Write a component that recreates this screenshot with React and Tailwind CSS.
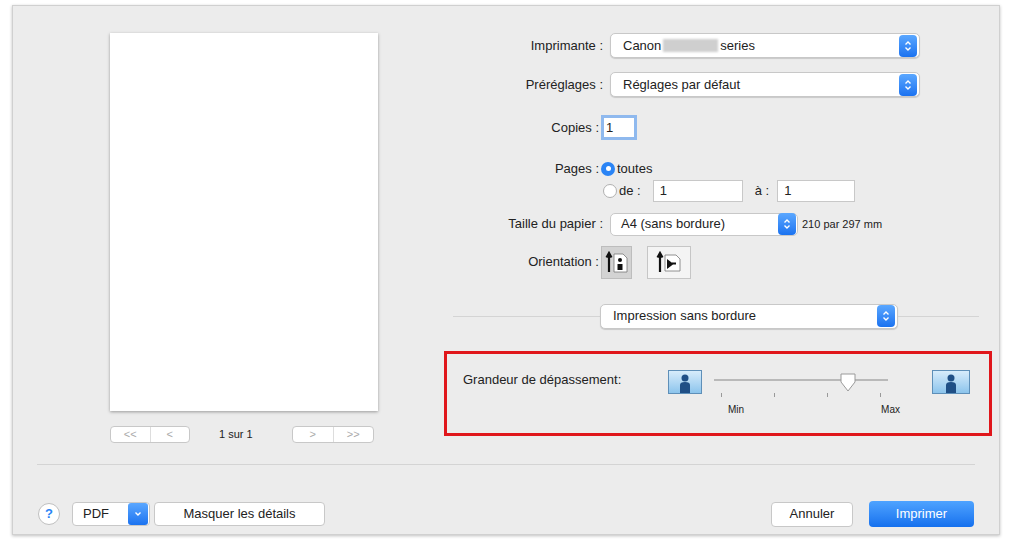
const F = { fontFamily: '"Liberation Sans", Arial, sans-serif' };

function Stepper({ cls = "" }) {
  return (
    <div className={"w-[18px] h-[22px] rounded-[4px] bg-gradient-to-b from-[#5aa7ff] to-[#1a72f0] flex items-center justify-center " + cls}>
      <svg width="8" height="12" viewBox="0 0 8 12"><path d="M1.5 4.5L4 2l2.5 2.5M1.5 7.5L4 10l2.5-2.5" stroke="white" strokeWidth="1.4" fill="none"/></svg>
    </div>
  );
}

function Popup({ w, children }) {
  return (
    <div className={"h-[25px] bg-white rounded-[5px] border border-[#c8c8c8] shadow-[0_1px_1px_rgba(0,0,0,0.15)] flex items-center justify-between pl-[12px] pr-[2px] " + w}>
      <span className="text-[13px] text-[#222]">{children}</span>
      <Stepper />
    </div>
  );
}

function Person({ wide }) {
  return (
    <div className={"h-[24px] border border-[#5e8fb8] bg-gradient-to-b from-[#d7ecfb] to-[#8cc4ec] flex items-end justify-center " + (wide ? "w-[38px]" : "w-[34px]")}>
      <svg width="16" height="20" viewBox="0 0 16 20">
        <circle cx="8" cy="5" r="3.5" fill="#1f4f86"/>
        <path d="M3 20V12q0-3 5-3t5 3v8z" fill="#1f4f86"/>
      </svg>
    </div>
  );
}

export default function App() {
  return (
    <div className="w-[1010px] h-[540px] bg-white pt-[5px] pl-[12px]" style={F}>
      <div className="w-[988px] h-[530px] bg-[#ececec] border border-[#d0d0d0] shadow-[0_1px_3px_rgba(0,0,0,0.25)] flex flex-col">
        <div className="flex h-[440px]">
          <div className="w-[420px] flex flex-col pl-[97px] pt-[27px]">
            <div className="w-[268px] h-[378px] bg-white shadow-[0_1px_3px_rgba(0,0,0,0.35)]" />
            <div className="flex items-center mt-[15px] text-[11px]">
              <div className="flex w-[80px] h-[17px] bg-white border border-[#c8c8c8] rounded-[4px] text-[#aaa] text-[11px]">
                <span className="flex-1 text-center border-r border-[#ddd] leading-[15px]">{"<<"}</span>
                <span className="flex-1 text-center leading-[15px]">{"<"}</span>
              </div>
              <span className="ml-[29px] w-[73px] text-[#222]">1 sur 1</span>
              <div className="flex w-[82px] h-[17px] bg-white border border-[#c8c8c8] rounded-[4px] text-[#aaa] text-[11px]">
                <span className="flex-1 text-center border-r border-[#ddd] leading-[15px]">{">"}</span>
                <span className="flex-1 text-center leading-[15px]">{">>"}</span>
              </div>
            </div>
          </div>
          <div className="flex-1 flex flex-col text-[13px] text-[#222]">
            <div className="flex items-center mt-[27px]">
              <span className="w-[177px] text-right pr-[7px]">Imprimante :</span>
              <div className="h-[25px] w-[310px] bg-white rounded-[5px] border border-[#c8c8c8] shadow-[0_1px_1px_rgba(0,0,0,0.15)] flex items-center justify-between pl-[12px] pr-[2px]">
                <span className="flex items-center">Canon <span className="inline-block w-[55px] h-[13px] bg-[#cfcfcf] mx-[2px] blur-[1px]" /> series</span>
                <Stepper />
              </div>
            </div>
            <div className="flex items-center mt-[14px]">
              <span className="w-[177px] text-right pr-[7px]">Préréglages :</span>
              <Popup w="w-[310px]">Réglages par défaut</Popup>
            </div>
            <div className="flex items-center mt-[18px]">
              <span className="w-[168px] text-right pr-[2px]">Copies :</span>
              <div className="w-[36px] h-[25px] bg-white border-[3px] border-[#8fb9ee] pl-[2px] leading-[19px]">1</div>
            </div>
            <div className="flex items-center mt-[19px]">
              <span className="w-[168px] text-right pr-[2px]">Pages :</span>
              <span className="w-[14px] h-[14px] rounded-full bg-[#2a84f5] flex items-center justify-center mr-[2px]"><span className="w-[5px] h-[5px] rounded-full bg-white" /></span>
              toutes
            </div>
            <div className="flex items-center mt-[1px]">
              <span className="ml-[170px] w-[14px] h-[14px] rounded-full bg-white border border-[#b0b0b0] mr-[2px]" />
              <span>de :</span>
              <div className="ml-[12px] w-[90px] h-[22px] bg-white border border-[#c8c8c8] pl-[6px] leading-[20px]">1</div>
              <span className="ml-[12px]">à :</span>
              <div className="ml-[8px] w-[78px] h-[22px] bg-white border border-[#c8c8c8] pl-[6px] leading-[20px]">1</div>
            </div>
            <div className="flex items-center mt-[11px]">
              <span className="w-[177px] text-right pr-[7px]">Taille du papier :</span>
              <div className="h-[23px] w-[188px] bg-white rounded-[5px] border border-[#c8c8c8] flex items-center justify-between pl-[10px] pr-[1px]">
                <span>A4 (sans bordure)</span><Stepper cls="h-[21px]" />
              </div>
              <span className="ml-[4px] text-[11px]">210 par 297 mm</span>
            </div>
            <div className="flex items-center mt-[10px]">
              <span className="w-[168px] text-right pr-[2px]">Orientation :</span>
              <div className="w-[31px] h-[33px] bg-[#d3d3d3] border border-[#bdbdbd] flex items-center justify-center">
                <svg width="24" height="22" viewBox="0 0 24 22"><path d="M4 21V4M1.5 6.5L4 2l2.5 4.5" stroke="#111" strokeWidth="2.2" fill="none"/><path d="M9 3h9l4 4v14H9z" fill="white" stroke="#777" strokeWidth="0.8"/><circle cx="15" cy="9" r="2" fill="#111"/><path d="M12.5 19v-6h5v6z" fill="#111"/></svg>
              </div>
              <div className="ml-[15px] w-[44px] h-[33px] bg-[#f4f4f4] border border-[#c6c6c6] flex items-center justify-center">
                <svg width="26" height="22" viewBox="0 0 26 22"><path d="M4 21V4M1.5 6.5L4 2l2.5 4.5" stroke="#111" strokeWidth="2.2" fill="none"/><path d="M9 4h11l4 4v12H9z" fill="white" stroke="#777" strokeWidth="0.8"/><path d="M12 10v6l4-3zM16 12.5h4" stroke="#111" strokeWidth="2" fill="#111"/></svg>
              </div>
            </div>
            <div className="flex items-center mt-[25px] mr-[20px] ml-[20px]">
              <div className="w-[147px] h-px bg-[#d4d4d4]" />
              <Popup w="w-[298px]">Impression sans bordure</Popup>
              <div className="flex-1 h-px bg-[#d4d4d4]" />
            </div>
            <div className="mt-[22px] ml-[11px] w-[548px] h-[85px] border-[3px] border-[#e0161b] flex pt-[16px] pl-[16px]">
              <span className="w-[205px]">Grandeur de dépassement:</span>
              <Person />
              <div className="w-[174px] mx-[12px] flex flex-col">
                <div className="relative h-[14px] mt-[3px]">
                  <div className="absolute left-[0px] right-0 top-[6px] h-[2px] bg-[#b9b9b9]" />
                  <svg className="absolute left-[125px] top-[0px]" width="18" height="20" viewBox="0 0 18 20"><path d="M2 1h14v8l-7 9-7-9z" fill="white" stroke="#9a9a9a"/></svg>
                </div>
                <div className="flex justify-between px-[7px] mt-[6px]">
                  {[0,1,2,3].map(i => <span key={i} className="w-px h-[4px] bg-[#999]" />)}
                </div>
                <div className="flex justify-between text-[10px] mt-[5px] pl-[14px] pr-0">
                  <span>Min</span><span className="translate-x-[12px]">Max</span>
                </div>
              </div>
              <div className="ml-[32px]"><Person wide /></div>
            </div>
          </div>
        </div>
        <div className="mx-[24px] mt-[18px] h-px bg-[#d4d4d4]" />
        <div className="flex items-center mt-[36px] px-[25px] text-[13px] text-[#222]">
          <div className="w-[22px] h-[22px] rounded-full bg-white border border-[#c0c0c0] flex items-center justify-center text-[#2a84f5] font-bold text-[13px]">?</div>
          <div className="ml-[12px] w-[78px] h-[24px] bg-white border border-[#c8c8c8] rounded-[4px] flex items-center justify-between pl-[10px] pr-[1px]">
            <span>PDF</span>
            <div className="w-[20px] h-[22px] bg-gradient-to-b from-[#5aa7ff] to-[#1a72f0] rounded-[3px] flex items-center justify-center">
              <svg width="8" height="6" viewBox="0 0 8 6"><path d="M1.5 1.5L4 4l2.5-2.5" stroke="white" strokeWidth="1.4" fill="none"/></svg>
            </div>
          </div>
          <div className="ml-[4px] w-[171px] h-[24px] bg-white border border-[#c8c8c8] rounded-[4px] flex items-center justify-center">Masquer les détails</div>
          <div className="flex-1" />
          <div className="w-[82px] h-[25px] bg-white border border-[#c8c8c8] rounded-[4px] flex items-center justify-center">Annuler</div>
          <div className="ml-[16px] w-[105px] h-[26px] rounded-[4px] bg-gradient-to-b from-[#4ea3ff] to-[#1470ee] text-white flex items-center justify-center">Imprimer</div>
        </div>
      </div>
    </div>
  );
}
